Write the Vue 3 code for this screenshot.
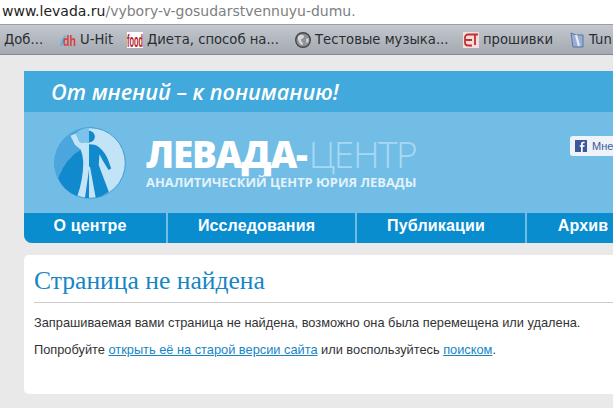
<script setup>
const bookmarks = [
  { label: "Доб...", icon: "", width: 56 },
  { label: "U-Hit", icon: "uhit", width: 67 },
  { label: "Диета, способ на...", icon: "food", width: 168 },
  { label: "Тестовые музыка...", icon: "globe", width: 168 },
  { label: "прошивки", icon: "cet", width: 106 },
  { label: "Tun", icon: "tun", width: 60 },
];
const menu = [
  { label: "О центре", width: 144 },
  { label: "Исследования", width: 189 },
  { label: "Публикации", width: 170 },
  { label: "Архив", width: 122 },
];
</script>

<template>
  <div class="window">
    <div class="urlbar">
      <span class="host">www.levada.ru</span><span class="path">/vybory-v-gosudarstvennuyu-dumu.</span>
    </div>
    <div class="bookmarks">
      <div v-for="b in bookmarks" :key="b.label" class="bookmark" :style="{ width: b.width + 'px' }">
        <svg v-if="b.icon === 'uhit'" class="favicon" viewBox="0 0 16 16">
          <path d="M0 14c0-4 2-8 5-11l1 1c-2 3-3 6-3 10z" fill="#6fb0ec" />
          <text x="3" y="14" class="uhit-text" textLength="13" lengthAdjust="spacingAndGlyphs">dh</text>
        </svg>
        <svg v-else-if="b.icon === 'food'" class="favicon" viewBox="0 0 16 16">
          <rect width="16" height="16" fill="#fff" />
          <text x="0" y="15" class="food-text" textLength="16" lengthAdjust="spacingAndGlyphs">food</text>
        </svg>
        <svg v-else-if="b.icon === 'globe'" class="favicon" viewBox="0 0 16 16">
          <circle cx="8" cy="8" r="7.300" fill="#8f9296" stroke="#44474a" stroke-width="1.400" />
          <path d="M4 3.500c3-1.500 5-.5 5 1.500s-3 1-3 3 2 2 2 4-3 .5-4-2-2-4.500 0-6.500zM11 7l2.500-1 0 3.500-2 2z" fill="#d5d7d9" />
        </svg>
        <svg v-else-if="b.icon === 'cet'" class="favicon" viewBox="0 0 16 16">
          <rect width="16" height="16" fill="#f7dedd" />
          <path d="M9 2.500H5a3 3 0 0 0-3 3v5a3 3 0 0 0 3 3h4M3 8h6M7 2.500h8M12 3v10" fill="none" stroke="#bb3236" stroke-width="1.800" />
        </svg>
        <svg v-else-if="b.icon === 'tun'" class="favicon" viewBox="0 0 16 16">
          <path d="M2 1l5 2h7v12H4z" fill="#98aed3" stroke="#5a74a5" />
          <path d="M7 3l3 11" stroke="#e8eef8" stroke-width="2.200" />
        </svg>
        <span>{{ b.label }}</span>
      </div>
    </div>

    <div class="page">
      <header class="site-header">
        <div class="slogan">От мнений – к пониманию!</div>
        <div class="brand">
          <svg class="logo" viewBox="44 19 212 214">
            <circle cx="150" cy="126" r="105" fill="#c3e3f7" stroke="#2f94cf" stroke-width="2.500" />
            <path d="M147 21A105 105 0 0 0 45 126Q45 150 55 170Q78 110 122 86L105 72 92 45 108 38 118 62Q128 68 132 64L147 66z" fill="#4aa6dc" />
            <path d="M147 21Q125 22 108 38L118 62Q128 68 132 64L147 66z" fill="#7cc2ea" />
            <path d="M55 170Q70 208 112 225Q130 175 130 122Q128 100 122 86Q78 110 55 170z" fill="#1189cd" />
            <path d="M147 30a17 17 0 0 1 0 35zM147 70Q170 70 178 80Q196 95 205 120L213 142 205 147 190 122 178 100 176 132 206 212Q188 225 167 229L150 137 147 137z" fill="#1189cd" />
            <path d="M147 145V230H135z" fill="#1189cd" />
          </svg>
          <div class="brand-text">
            <div class="brand-name"><b>ЛЕВАДА-</b><span>ЦЕНТР</span></div>
            <div class="brand-sub">АНАЛИТИЧЕСКИЙ ЦЕНТР ЮРИЯ ЛЕВАДЫ</div>
          </div>
          <div class="like">
            <svg class="fb" viewBox="0 0 14 14">
              <rect width="14" height="14" fill="#3b5998" />
              <path d="M9 14V8h2l.3-2H9V4.800c0-.7.3-1 1-1h1.300V2H9.500C7.800 2 7 3 7 4.500V6H5.500v2H7v6z" fill="#fff" />
            </svg>
            <span>Мне</span>
          </div>
        </div>
        <nav class="menu">
          <div v-for="m in menu" :key="m.label" class="menu-item" :style="{ width: m.width + 'px' }">{{ m.label }}</div>
        </nav>
      </header>

      <main class="card">
        <h1>Страница не найдена</h1>
        <p>Запрашиваемая вами страница не найдена, возможно она была перемещена или удалена.</p>
        <p>Попробуйте <a href="#">открыть её на старой версии сайта</a> или воспользуйтесь <a href="#">поиском</a>.</p>
      </main>
    </div>
  </div>
</template>

<style>
html,
body {
  margin: 0;
  overflow: hidden;
}
</style>

<style scoped>
.window {
  width: 613px;
  height: 408px;
  overflow: hidden;
  background: #e9e9e9;
  font-family: "DejaVu Sans", sans-serif;
}
.urlbar {
  height: 24px;
  box-sizing: border-box;
  padding: 0 0 0 2px;
  background: #fff;
  font-size: 14px;
  line-height: 22px;
  white-space: nowrap;
}
.host {
  color: #1d1d1d;
}
.path {
  color: #808080;
}
.bookmarks {
  display: flex;
  height: 31px;
  box-sizing: border-box;
  padding-left: 4px;
  border-top: 1px solid #9b9fa4;
  border-bottom: 1px solid #85888c;
  background: linear-gradient(#c3c8ce, #a3a9b0);
  font-size: 13.2px;
  color: #2a2d31;
  white-space: nowrap;
}
.bookmark {
  display: flex;
  flex: none;
  align-items: center;
  gap: 4px;
}
.favicon {
  flex: none;
  width: 16px;
  height: 16px;
}
.uhit-text {
  fill: #d8403c;
  font-family: "Liberation Sans", sans-serif;
  font-size: 15px;
  font-weight: 700;
}
.food-text {
  fill: #b5222a;
  font-family: "Liberation Sans", sans-serif;
  font-size: 19px;
  font-weight: 700;
}
.page {
  padding: 16px 0 0 24px;
  width: 700px;
}
.site-header {
  border-radius: 0 0 0 8px;
  overflow: hidden;
  background: #72bde6;
}
.slogan {
  height: 41px;
  padding-left: 27px;
  background: #41a9dc;
  color: #fff;
  font-family: "Open Sans", sans-serif;
  font-size: 21.7px;
  font-style: italic;
  font-weight: 600;
  line-height: 41px;
}
.brand {
  display: flex;
  height: 101px;
  box-sizing: border-box;
  padding: 15px 0 0 30px;
}
.logo {
  flex: none;
  width: 72px;
  height: 72px;
}
.brand-text {
  flex: none;
  width: 424px;
  margin-left: 20px;
  color: #fff;
  font-family: "Open Sans", sans-serif;
}
.brand-name {
  height: 40px;
  margin-top: 7px;
  font-size: 37px;
  line-height: 40px;
  letter-spacing: -1.2px;
  white-space: nowrap;
}
.brand-name b {
  font-weight: 800;
}
.brand-name span {
  margin-left: 2px;
  font-weight: 300;
  letter-spacing: -1.4px;
  color: #a9d8f3;
}
.brand-sub {
  font-size: 12.9px;
  font-weight: 700;
  line-height: 16px;
  color: #e3f2fb;
  white-space: nowrap;
}
.like {
  display: flex;
  flex: none;
  align-items: center;
  gap: 5px;
  height: 20px;
  margin-top: 9px;
  padding-left: 5px;
  width: 80px;
  border-radius: 3px;
  background: #eef3f9;
  color: #3b5998;
  font-family: "Liberation Sans", sans-serif;
  font-size: 11px;
}
.fb {
  flex: none;
  width: 12px;
  height: 12px;
}
.menu {
  display: flex;
  height: 30px;
  background: #0a8dcf;
}
.menu-item {
  flex: none;
  box-sizing: border-box;
  padding-right: 10px;
  border-right: 2px solid #72bde6;
  color: #fff;
  font-family: "Liberation Sans", sans-serif;
  font-size: 16px;
  font-weight: 700;
  letter-spacing: 0.15px;
  line-height: 26px;
  text-align: center;
}
.menu-item:last-child {
  border-right: 0;
}
.card {
  height: 139px;
  box-sizing: border-box;
  margin-top: 12px;
  padding: 10px 10px 0;
  border-radius: 5px 0 0 5px;
  background: #fff;
  font-family: "Liberation Sans", sans-serif;
  font-size: 12.8px;
  color: #333;
}
h1 {
  margin: 0 0 12px;
  padding-bottom: 5px;
  border-bottom: 1px solid #ccc;
  color: #1586c4;
  font-family: "Liberation Serif", serif;
  font-size: 25.6px;
  font-weight: 400;
  line-height: 32px;
}
p {
  margin: 0 0 12px;
  line-height: 15px;
}
a {
  color: #1586c4;
}
</style>
